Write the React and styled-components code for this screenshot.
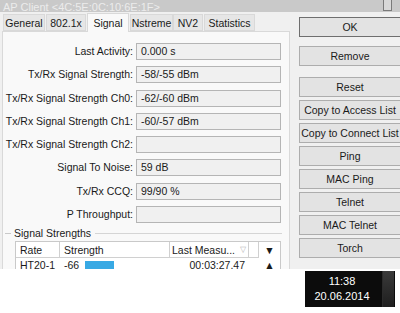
import React from "react";
import styled, { createGlobalStyle } from "styled-components";

const Global = createGlobalStyle`
  html, body { margin: 0; padding: 0; background: #ffffff; overflow: hidden; }
  body { font-family: "Liberation Sans", Arial, sans-serif; }
`;

const Page = styled.div`
  width: 400px;
  height: 313px;
  display: flex;
  flex-direction: column;
  overflow: hidden;
  background: #ffffff;
`;

const Window = styled.div`
  height: 269px;
  background: #f0f0f0;
  display: flex;
  flex-direction: column;
  overflow: hidden;
`;

const TitleBar = styled.div`
  height: 12px;
  flex: none;
  background: #c9c9c9;
  display: flex;
  align-items: flex-end;
  justify-content: space-between;
  padding: 0 8px 0 3px;
  overflow: hidden;
`;

const TitleText = styled.span`
  color: #ececec;
  font-size: 11px;
  line-height: 11px;
  margin-bottom: -1px;
  white-space: nowrap;
`;

const MaxBox = styled.div`
  width: 9px;
  height: 11px;
  border: 1px solid #7a7a7a;
  border-top: none;
  background: #d8d8d8;
  align-self: flex-start;
  box-sizing: border-box;
`;

const Body = styled.div`
  flex: 1;
  display: flex;
  min-height: 0;
`;

const LeftPane = styled.div`
  width: 288px;
  padding-left: 2px;
  display: flex;
  flex-direction: column;
  flex: none;
`;

const TabRow = styled.div`
  height: 19px;
  display: flex;
  align-items: flex-end;
  padding-left: 1px;
  flex: none;
`;

const Tab = styled.div`
  height: ${(p) => (p.$active ? 19 : 17)}px;
  width: ${(p) => p.$w}px;
  box-sizing: border-box;
  border: 1px solid #d9d9d9;
  border-bottom: ${(p) => (p.$active ? "none" : "1px solid #d9d9d9")};
  background: ${(p) => (p.$active ? "#f9f9f9" : "#e6e6e6")};
  font-size: 10.5px;
  color: #1a1a1a;
  display: flex;
  align-items: center;
  justify-content: center;
  white-space: nowrap;
  margin-right: ${(p) => p.$gap || 0}px;
  margin-bottom: ${(p) => (p.$active ? -1 : 0)}px;
  position: relative;
  z-index: ${(p) => (p.$active ? 1 : 0)};
`;

const Panel = styled.div`
  flex: 1;
  background: #f9f9f9;
  border: 1px solid #d9d9d9;
  border-bottom: none;
  padding: 11px 0 0 0;
  display: flex;
  flex-direction: column;
  min-height: 0;
`;

const FieldGrid = styled.div`
  display: grid;
  grid-template-columns: 130px 145px;
  column-gap: 3px;
  row-gap: 6.3px;
  grid-auto-rows: 17px;
`;

const Label = styled.div`
  font-size: 10.5px;
  color: #1a1a1a;
  text-align: right;
  line-height: 17px;
  white-space: nowrap;
`;

const Field = styled.div`
  box-sizing: border-box;
  border: 1px solid #b5b5b5;
  background: #f0f0f0;
  font-size: 10.5px;
  color: #1a1a1a;
  line-height: 15px;
  padding-left: 4px;
  white-space: nowrap;
`;

const GroupHead = styled.div`
  display: flex;
  align-items: center;
  margin: 4px 7px 0 2px;
  height: 14px;
  font-size: 10.5px;
  color: #1a1a1a;
  &::before {
    content: "";
    width: 6px;
    border-top: 1px solid #c9c9c9;
    margin-right: 3px;
  }
  &::after {
    content: "";
    flex: 1;
    border-top: 1px solid #d5d5d5;
    margin-left: 4px;
  }
`;

const Table = styled.div`
  margin: 2px 0 0 12px;
  width: 264px;
  background: #ffffff;
  border: 1px solid #c9c9c9;
  border-bottom: none;
`;

const TRow = styled.div`
  display: grid;
  grid-template-columns: 44px 110px 79px 10px 21px;
  height: ${(p) => (p.$head ? 16 : 14)}px;
`;

const Cell = styled.div`
  font-size: 10.5px;
  color: #1a1a1a;
  padding: 0 ${(p) => (p.$tight ? 2 : 4)}px;
  display: flex;
  align-items: center;
  gap: ${(p) => (p.$tight ? 2 : 6)}px;
  white-space: nowrap;
  overflow: hidden;
  justify-content: ${(p) => p.$align || "flex-start"};
  border-right: ${(p) => (p.$head ? "1px solid #d0d0d0" : "none")};
  border-bottom: ${(p) => (p.$head ? "1px solid #d0d0d0" : "none")};
`;

const SortMark = styled.span`
  color: #b5b5b5;
  font-size: 8px;
`;

const Bar = styled.span`
  display: inline-block;
  width: 29px;
  height: 9px;
  background: #38a9e4;
`;

const RightPane = styled.div`
  flex: 1;
  display: flex;
  flex-direction: column;
  padding: 5px 0 0 9px;
`;

const Btn = styled.div`
  width: 102px;
  height: 20px;
  box-sizing: border-box;
  border: 1px solid ${(p) => (p.$default ? "#6e6e6e" : "#adadad")};
  background: #e3e3e3;
  font-size: 10.5px;
  color: #1a1a1a;
  display: flex;
  align-items: center;
  justify-content: center;
  white-space: nowrap;
  overflow: hidden;
  margin-top: ${(p) => p.$mt}px;
  flex: none;
`;

const Bottom = styled.div`
  flex: 1;
  display: flex;
  justify-content: flex-end;
  padding: 2px 5px 0 0;
`;

const Clock = styled.div`
  width: 90px;
  height: 36px;
  background: #0c0c0c;
  display: flex;
`;

const ClockText = styled.div`
  flex: 1;
  display: flex;
  flex-direction: column;
  align-items: center;
  justify-content: center;
  color: #ffffff;
  font-size: 11px;
  line-height: 15px;
  padding-right: 3px;
`;

const ClockStrip = styled.div`
  width: 11px;
  margin: 0 1px 0 0;
  background: linear-gradient(180deg, #3a3a3a, #1e1e1e);
  border-left: 1px solid #2a2a2a;
`;

const tabs = [
  { t: "General", w: 42, g: 1 },
  { t: "802.1x", w: 40, g: 1 },
  { t: "Signal", w: 42, g: 1, a: true },
  { t: "Nstreme", w: 43, g: 0 },
  { t: "NV2", w: 30, g: 1 },
  { t: "Statistics", w: 51, g: 0 },
];

const fields = [
  ["Last Activity:", "0.000 s"],
  ["Tx/Rx Signal Strength:", "-58/-55 dBm"],
  ["Tx/Rx Signal Strength Ch0:", "-62/-60 dBm"],
  ["Tx/Rx Signal Strength Ch1:", "-60/-57 dBm"],
  ["Tx/Rx Signal Strength Ch2:", ""],
  ["Signal To Noise:", "59 dB"],
  ["Tx/Rx CCQ:", "99/90 %"],
  ["P Throughput:", ""],
];

const buttons = [
  ["OK", 0, true],
  ["Remove", 9],
  ["Reset", 11],
  ["Copy to Access List", 3],
  ["Copy to Connect List", 3],
  ["Ping", 3],
  ["MAC Ping", 3],
  ["Telnet", 3],
  ["MAC Telnet", 3],
  ["Torch", 3],
];

export default function App() {
  return (
    <>
      <Global />
      <Page>
        <Window>
          <TitleBar>
            <TitleText>AP Client &lt;4C:5E:0C:10:6E:1F&gt;</TitleText>
            <MaxBox />
          </TitleBar>
          <Body>
            <LeftPane>
              <TabRow>
                {tabs.map((t) => (
                  <Tab key={t.t} $w={t.w} $gap={t.g} $active={t.a}>
                    {t.t}
                  </Tab>
                ))}
              </TabRow>
              <Panel>
                <FieldGrid>
                  {fields.map(([l, v]) => (
                    <React.Fragment key={l}>
                      <Label>{l}</Label>
                      <Field>{v}</Field>
                    </React.Fragment>
                  ))}
                </FieldGrid>
                <GroupHead>Signal Strengths</GroupHead>
                <Table>
                  <TRow $head>
                    <Cell $head>Rate</Cell>
                    <Cell $head>Strength</Cell>
                    <Cell $head $tight $align="space-between">
                      Last Measu... <SortMark>▽</SortMark>
                    </Cell>
                    <Cell $head />
                    <Cell $align="center">▼</Cell>
                  </TRow>
                  <TRow>
                    <Cell>HT20-1</Cell>
                    <Cell>
                      -66 <Bar />
                    </Cell>
                    <Cell $align="flex-end">00:03:27.47</Cell>
                    <Cell />
                    <Cell $align="center">▲</Cell>
                  </TRow>
                </Table>
              </Panel>
            </LeftPane>
            <RightPane>
              {buttons.map(([t, mt, d]) => (
                <Btn key={t} $mt={mt} $default={d}>
                  {t}
                </Btn>
              ))}
            </RightPane>
          </Body>
        </Window>
        <Bottom>
          <Clock>
            <ClockText>
              <span>11:38</span>
              <span>20.06.2014</span>
            </ClockText>
            <ClockStrip />
          </Clock>
        </Bottom>
      </Page>
    </>
  );
}
